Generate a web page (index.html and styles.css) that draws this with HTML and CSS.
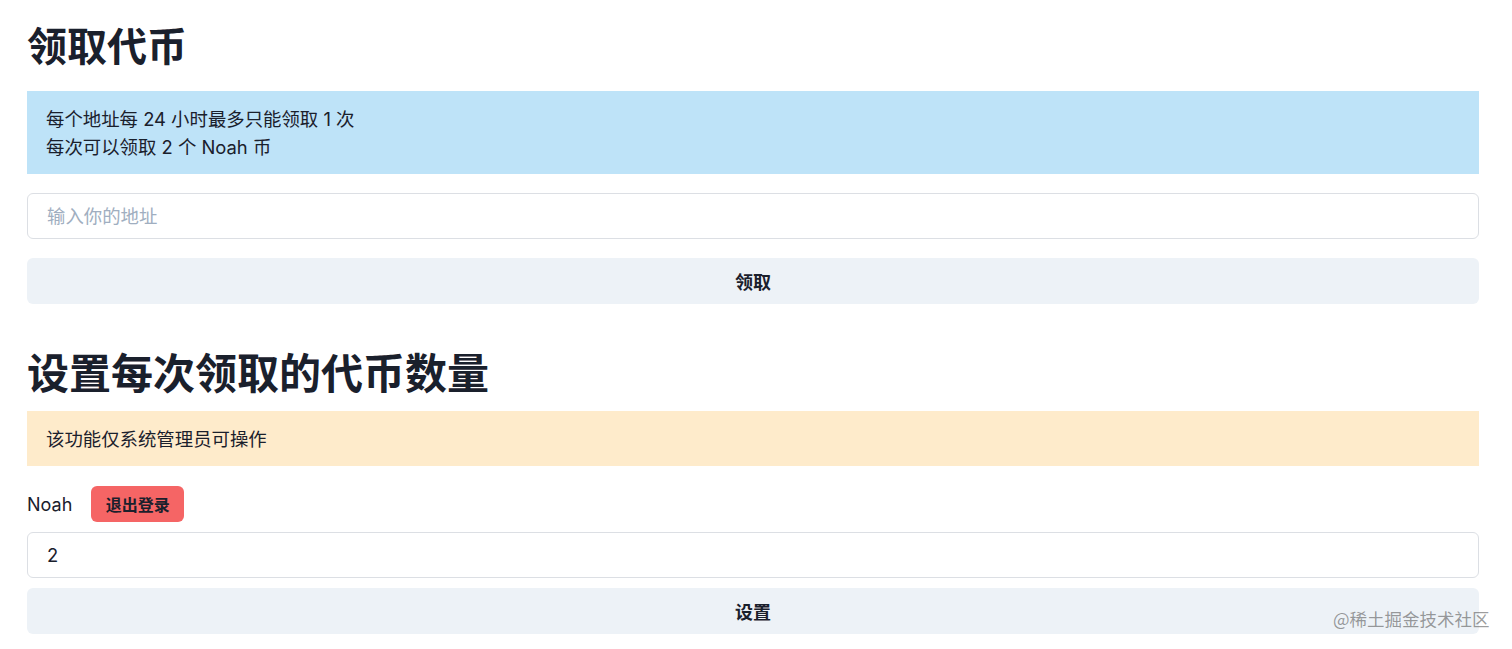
FILE: index.html
```html
<!DOCTYPE html>
<html lang="zh-CN">
<head>
<meta charset="utf-8">
<title>领取代币</title>
<link rel="stylesheet" href="styles.css">
</head>
<body>
<main class="page">
  <section class="section">
    <h1 class="title title-sm">领取代币</h1>
    <div class="alert alert-info">
      <div>每个地址每 24 小时最多只能领取 1 次</div>
      <div>每次可以领取 2 个 Noah 币</div>
    </div>
    <input class="field gap-lg" type="text" placeholder="输入你的地址">
    <button class="btn-block gap-lg" type="button">领取</button>
  </section>
  <section class="section section-2">
    <h2 class="title title-lg">设置每次领取的代币数量</h2>
    <div class="alert alert-warn">该功能仅系统管理员可操作</div>
    <div class="user-row">
      <span class="user-name">Noah</span>
      <button class="btn-logout" type="button">退出登录</button>
    </div>
    <input class="field gap-sm" type="text" value="2">
    <button class="btn-block gap-sm" type="button">设置</button>
  </section>
</main>
<div class="watermark">@稀土掘金技术社区</div>
</body>
</html>
```
FILE: styles.css
```css
* { box-sizing: border-box; }
html, body { margin: 0; padding: 0; background: #fff; }
body {
  font-family: "Inter", "Noto Sans CJK SC", sans-serif;
  color: #1a202c;
  font-size: 18px;
}
.page {
  padding: 20px 33px 0 27px;
  display: flex;
  flex-direction: column;
}
.section { display: flex; flex-direction: column; }
.section-2 { margin-top: 42px; }
.title {
  margin: 0;
  font-weight: 700;
  line-height: 1.2;
  font-family: "Noto Sans CJK SC", sans-serif;
}
.title-sm { font-size: 40px; height: 48px; margin-bottom: 23px; }
.title-lg { font-size: 42px; height: 55px; margin-bottom: 10px; }
.alert {
  padding: 13.5px 19px;
  line-height: 28px;
  font-size: 18.4px;
}
.alert-info { background: #bee3f8; }
.alert-warn { background: #feebcb; }
.field {
  display: block;
  width: 100%;
  height: 46px;
  border: 1px solid #dcdfe4;
  border-radius: 6px;
  padding: 0 19px;
  font-family: inherit;
  font-size: 18.4px;
  color: #1a202c;
  background: #fff;
  outline: none;
}
.field::placeholder { color: #a0aec0; }
.btn-block {
  display: block;
  width: 100%;
  height: 46px;
  border: none;
  border-radius: 6px;
  background: #edf2f7;
  font-family: inherit;
  font-size: 18px;
  font-weight: 700;
  color: #1a202c;
}
.gap-lg { margin-top: 19px; }
.gap-sm { margin-top: 10px; }
.user-row {
  margin-top: 20px;
  display: flex;
  align-items: center;
  gap: 19px;
}
.user-name { font-size: 18px; }
.btn-logout {
  height: 36px;
  padding: 0 14.5px;
  border: none;
  border-radius: 6px;
  background: #f56565;
  color: #1a202c;
  font-family: inherit;
  font-size: 16px;
  font-weight: 700;
}
.watermark {
  position: absolute;
  left: 1333px;
  top: 607px;
  font-family: "Noto Sans CJK SC", sans-serif;
  font-size: 17.5px;
  line-height: 24px;
  color: rgba(90, 90, 90, 0.6);
  white-space: nowrap;
}
```
